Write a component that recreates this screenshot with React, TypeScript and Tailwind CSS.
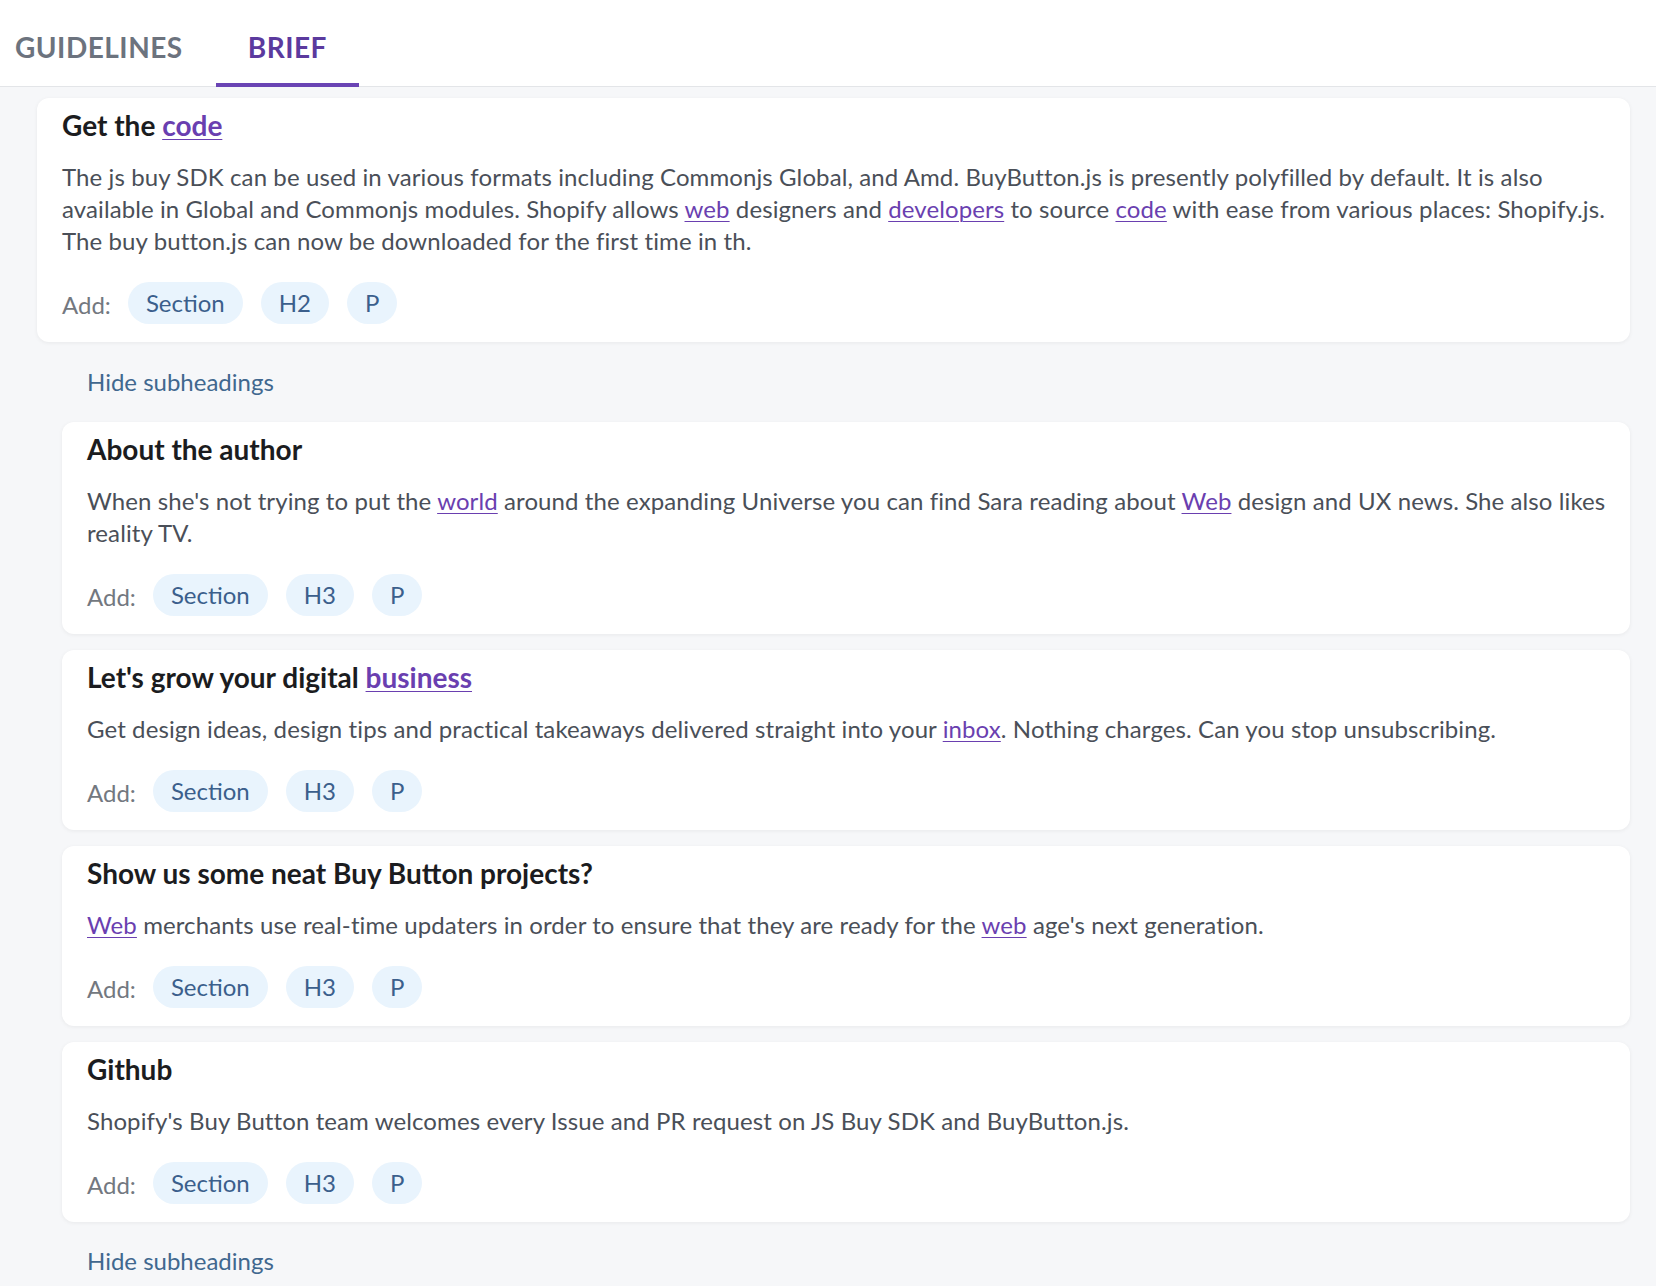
import React from 'react';

type Part = string | { link: string };

interface Block {
  title: Part[];
  body: Part[];
  level: string;
}

const mainBlock: Block = {
  title: ['Get the ', { link: 'code' }],
  body: [
    'The js buy SDK can be used in various formats including Commonjs Global, and Amd. BuyButton.js is presently polyfilled by default. It is also available in Global and Commonjs modules. Shopify allows ',
    { link: 'web' },
    ' designers and ',
    { link: 'developers' },
    ' to source ',
    { link: 'code' },
    ' with ease from various places: Shopify.js. The buy button.js can now be downloaded for the first time in th.',
  ],
  level: 'H2',
};

const subBlocks: Block[] = [
  {
    title: ['About the author'],
    body: [
      "When she's not trying to put the ",
      { link: 'world' },
      ' around the expanding Universe you can find Sara reading about ',
      { link: 'Web' },
      ' design and UX news. She also likes reality TV.',
    ],
    level: 'H3',
  },
  {
    title: ["Let's grow your digital ", { link: 'business' }],
    body: [
      'Get design ideas, design tips and practical takeaways delivered straight into your ',
      { link: 'inbox' },
      '. Nothing charges. Can you stop unsubscribing.',
    ],
    level: 'H3',
  },
  {
    title: ['Show us some neat Buy Button projects?'],
    body: [
      { link: 'Web' },
      ' merchants use real-time updaters in order to ensure that they are ready for the ',
      { link: 'web' },
      " age's next generation.",
    ],
    level: 'H3',
  },
  {
    title: ['Github'],
    body: ["Shopify's Buy Button team welcomes every Issue and PR request on JS Buy SDK and BuyButton.js."],
    level: 'H3',
  },
];

const renderParts = (parts: Part[]) =>
  parts.map((p, i) =>
    typeof p === 'string' ? (
      <React.Fragment key={i}>{p}</React.Fragment>
    ) : (
      <a key={i} href="#" className="text-[#6a3fb0] underline underline-offset-[3px] decoration-1">
        {p.link}
      </a>
    )
  );

const Chip = ({ label }: { label: string }) => (
  <button className="h-[42px] px-[18px] rounded-full bg-[#e9f4fd] text-[#3b5f8c] text-[24px] leading-none">
    {label}
  </button>
);

const BlockCard = ({ block }: { block: Block }) => (
  <div className="bg-white rounded-xl shadow-[0_1px_4px_rgba(0,0,0,0.06)] pl-[25px] pr-[16px] pt-[8px] pb-[18px]">
    <h3 className="text-[28px] leading-[38px] font-bold text-[#1b1c20]">{renderParts(block.title)}</h3>
    <p className="mt-[17px] text-[24px] leading-[32px] tracking-[0.1px] text-[#4a4f58] [font-variant-ligatures:none]">
      {renderParts(block.body)}
    </p>
    <div className="mt-[25px] flex items-center gap-[18px]">
      <span className="text-[24px] text-[#737880] pt-[3px] mr-[-1px]">Add:</span>
      <Chip label="Section" />
      <Chip label={block.level} />
      <Chip label="P" />
    </div>
  </div>
);

const HideLink = ({ last }: { last?: boolean }) => (
  <div className={last ? 'pl-[50px] h-[78px] flex items-center' : 'pl-[50px] h-[80px] flex items-center'}>
    <a href="#" className="text-[24px] text-[#41688f]">
      Hide subheadings
    </a>
  </div>
);

export default function App() {
  return (
    <div className="min-h-screen bg-[#f6f7f9] font-['Lato',sans-serif]">
      <div className="bg-white border-b border-[#e3e5e8] flex h-[87px]">
        <button className="pl-[15px] pr-[33px] text-[28px] font-bold tracking-[0.5px] text-[#6c737e] h-full pt-[7px]">
          GUIDELINES
        </button>
        <button className="relative px-8 text-[28px] font-bold tracking-[0.5px] text-[#5b3a9e] h-full pt-[7px]">
          BRIEF
          <span className="absolute left-0 right-0 -bottom-px h-1 bg-[#6a44b4]" />
        </button>
      </div>
      <div className="pl-[37px] pr-[26px] pt-[11px]">
        <BlockCard block={mainBlock} />
        <HideLink />
        <div className="pl-[25px] flex flex-col gap-[16px]">
          {subBlocks.map((b, i) => (
            <BlockCard key={i} block={b} />
          ))}
        </div>
        <HideLink last />
      </div>
    </div>
  );
}
